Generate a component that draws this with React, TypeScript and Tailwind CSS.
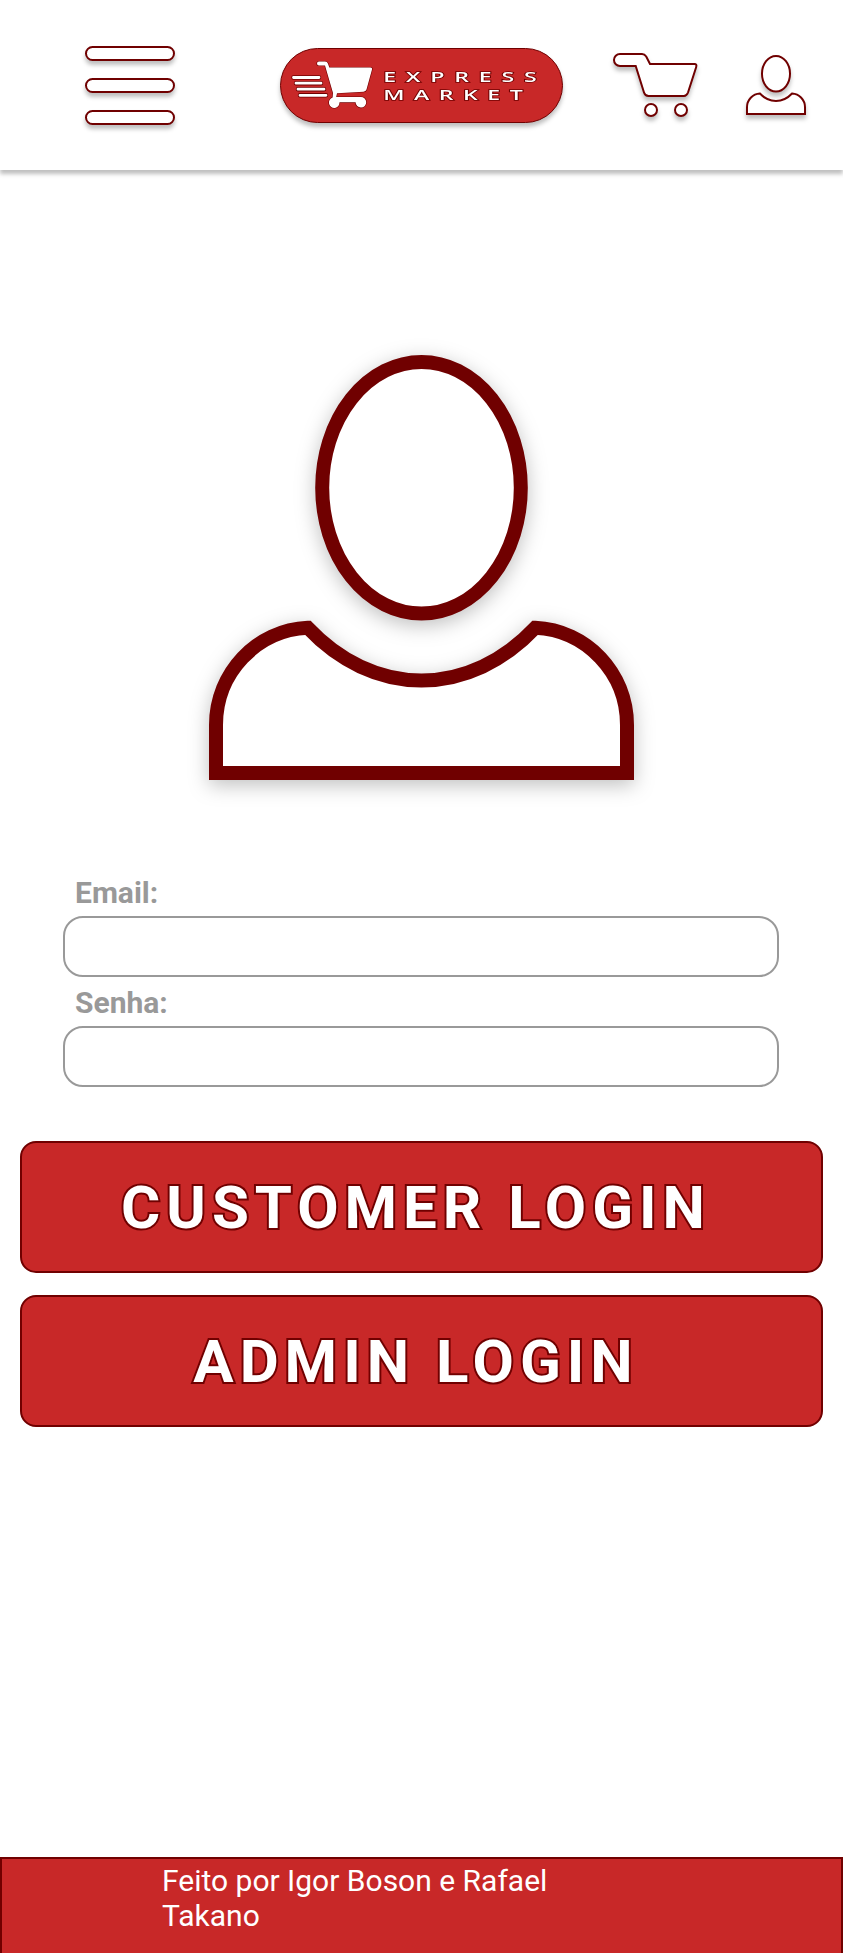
const EDGE = '#700000';
const SOFT = 'overflow-visible drop-shadow-[0_4px_2px_rgba(0,0,0,0.25)]';

function UserIcon({ className }: { className: string }) {
  return (
    <svg viewBox="0 0 425 425" className={className} fill="white" stroke={EDGE} strokeWidth="14">
      <ellipse cx="212.5" cy="132.8" rx="99.3" ry="125.8" />
      <path d="M7 418V370C7 318 47.500 275 98.800 272.800C130 306 170 325.500 212.500 325.500C255 325.500 295 306 326.200 272.800C377.500 275 418 318 418 370V418Z" />
    </svg>
  );
}

function CartIcon() {
  return (
    <svg viewBox="0 0 84 65" className={`h-[65px] w-[84px] ${SOFT}`} fill="white" stroke={EDGE} strokeWidth="2">
      <path d="M7 1H29C31.200 1 32.200 2 33.200 3.500L37 11H81.500C83.200 11 83.800 12.200 83.200 14L75 39.500C74 42.200 73 43 71 43H35.500C33 43 31.800 42 31 39.500L22.700 13H7A6 6 0 0 1 7 1Z" />
      <circle cx="38" cy="57" r="6" />
      <circle cx="68" cy="57" r="6" />
    </svg>
  );
}

function Logo() {
  return (
    <svg
      viewBox="0 0 283 75"
      role="img"
      aria-label="Express Market"
      className={`h-[75px] w-[283px] ${SOFT}`}
    >
      <rect x="0.5" y="0.5" width="282" height="74" rx="37" fill="#C82828" stroke={EDGE} />
      <g stroke={EDGE} strokeWidth="4.4" strokeLinecap="round" strokeLinejoin="round" fill="none">
        <path d="M13.500 29.500H39M16 35.200H41M18 41.200H44M20 47.300H46" />
      </g>
      <g stroke="white" strokeWidth="2.8" strokeLinecap="round" fill="none">
        <path d="M13.500 29.500H39M16 35.200H41M18 41.200H44M20 47.300H46" />
      </g>
      <g fill="white" stroke={EDGE} strokeWidth="1.2" style={{ paintOrder: 'stroke' }}>
        <path d="M39 13.500H45Q47.300 13.500 48 15.800L49.300 19.600H90.500Q92.600 19.600 92 21.600L86.500 41.500Q85.800 43.600 83.500 43.700L57 45.200L56.200 49H80.500A5.300 5.300 0 1 1 75.600 54.300H59.500A5.300 5.300 0 1 1 52.600 49.600L53 45L45 17.500H39A2 2 0 0 1 39 13.500Z" />
      </g>
      <g
        fill="white"
        stroke={EDGE}
        strokeWidth="1.4"
        fontFamily="'Open Sans', sans-serif"
        fontWeight="600"
        fontSize="14"
        style={{ paintOrder: 'stroke' }}
      >
        <text transform="translate(103.300 33.700) scale(1.65 1)" textLength="93" lengthAdjust="spacing">
          EXPRESS
        </text>
        <text transform="translate(103.300 52) scale(1.65 1)" textLength="84.500" lengthAdjust="spacing">
          MARKET
        </text>
      </g>
    </svg>
  );
}

function Field({ label, type }: { label: string; type: string }) {
  return (
    <label className="flex flex-col">
      <span className="h-[41px] pl-3 text-[30px] leading-[35px] font-bold text-[#999999]">{label}</span>
      <input type={type} className="h-[61px] w-full rounded-[20px] border-2 border-[#999999] bg-white px-4 text-2xl" />
    </label>
  );
}

function LoginButton({ children }: { children: string }) {
  return (
    <button className="flex h-[132px] w-full items-center justify-center rounded-2xl border-2 border-[#700000] bg-[#C82828] pt-0.5 pr-[11px] text-[60px] leading-[70px] font-bold tracking-[6px] text-white [-webkit-text-stroke:4px_#700000] [paint-order:stroke_fill]">
      {children}
    </button>
  );
}

export default function App() {
  return (
    <div className="flex h-[1953px] w-[843px] flex-col overflow-hidden bg-white font-['Roboto',sans-serif]">
      <header className="flex h-[170px] shrink-0 items-start bg-white pl-[85px] shadow-[0_4px_4px_rgba(0,0,0,0.25)]">
        <button aria-label="Menu" className="mt-[46px] flex flex-col gap-[17px]">
          {[0, 1, 2].map((bar) => (
            <span
              key={bar}
              className="block h-[15px] w-[90px] rounded-full border-2 border-[#700000] bg-white shadow-[0_4px_4px_rgba(0,0,0,0.25)]"
            />
          ))}
        </button>
        <div className="mt-12 ml-[105px]">
          <Logo />
        </div>
        <div className="mt-[53px] ml-[50px]">
          <CartIcon />
        </div>
        <div className="mt-[55px] ml-[49px]">
          <UserIcon className="size-[60px] overflow-visible drop-shadow-[0_4px_2px_rgba(0,0,0,0.25)]" />
        </div>
      </header>

      <main className="flex flex-1 flex-col">
        <div className="mt-[185px] flex justify-center">
          <UserIcon className="size-[425px] overflow-visible drop-shadow-[0_5px_10px_rgba(0,0,0,0.25)]" />
        </div>
        <form className="mt-[95px] flex flex-col" onSubmit={(e) => e.preventDefault()}>
          <div className="ml-[63px] flex w-[716px] flex-col gap-2">
            <Field label="Email:" type="email" />
            <Field label="Senha:" type="password" />
          </div>
          <div className="mx-5 mt-[54px] flex flex-col gap-[22px]">
            <LoginButton>CUSTOMER LOGIN</LoginButton>
            <LoginButton>ADMIN LOGIN</LoginButton>
          </div>
        </form>
      </main>

      <footer className="h-24 shrink-0 border-2 border-b-0 border-[#700000] bg-[#C82828] pt-1 pl-[160px] text-[30px] leading-[35px] text-white">
        <p className="w-[440px]">Feito por Igor Boson e Rafael Takano</p>
      </footer>
    </div>
  );
}
